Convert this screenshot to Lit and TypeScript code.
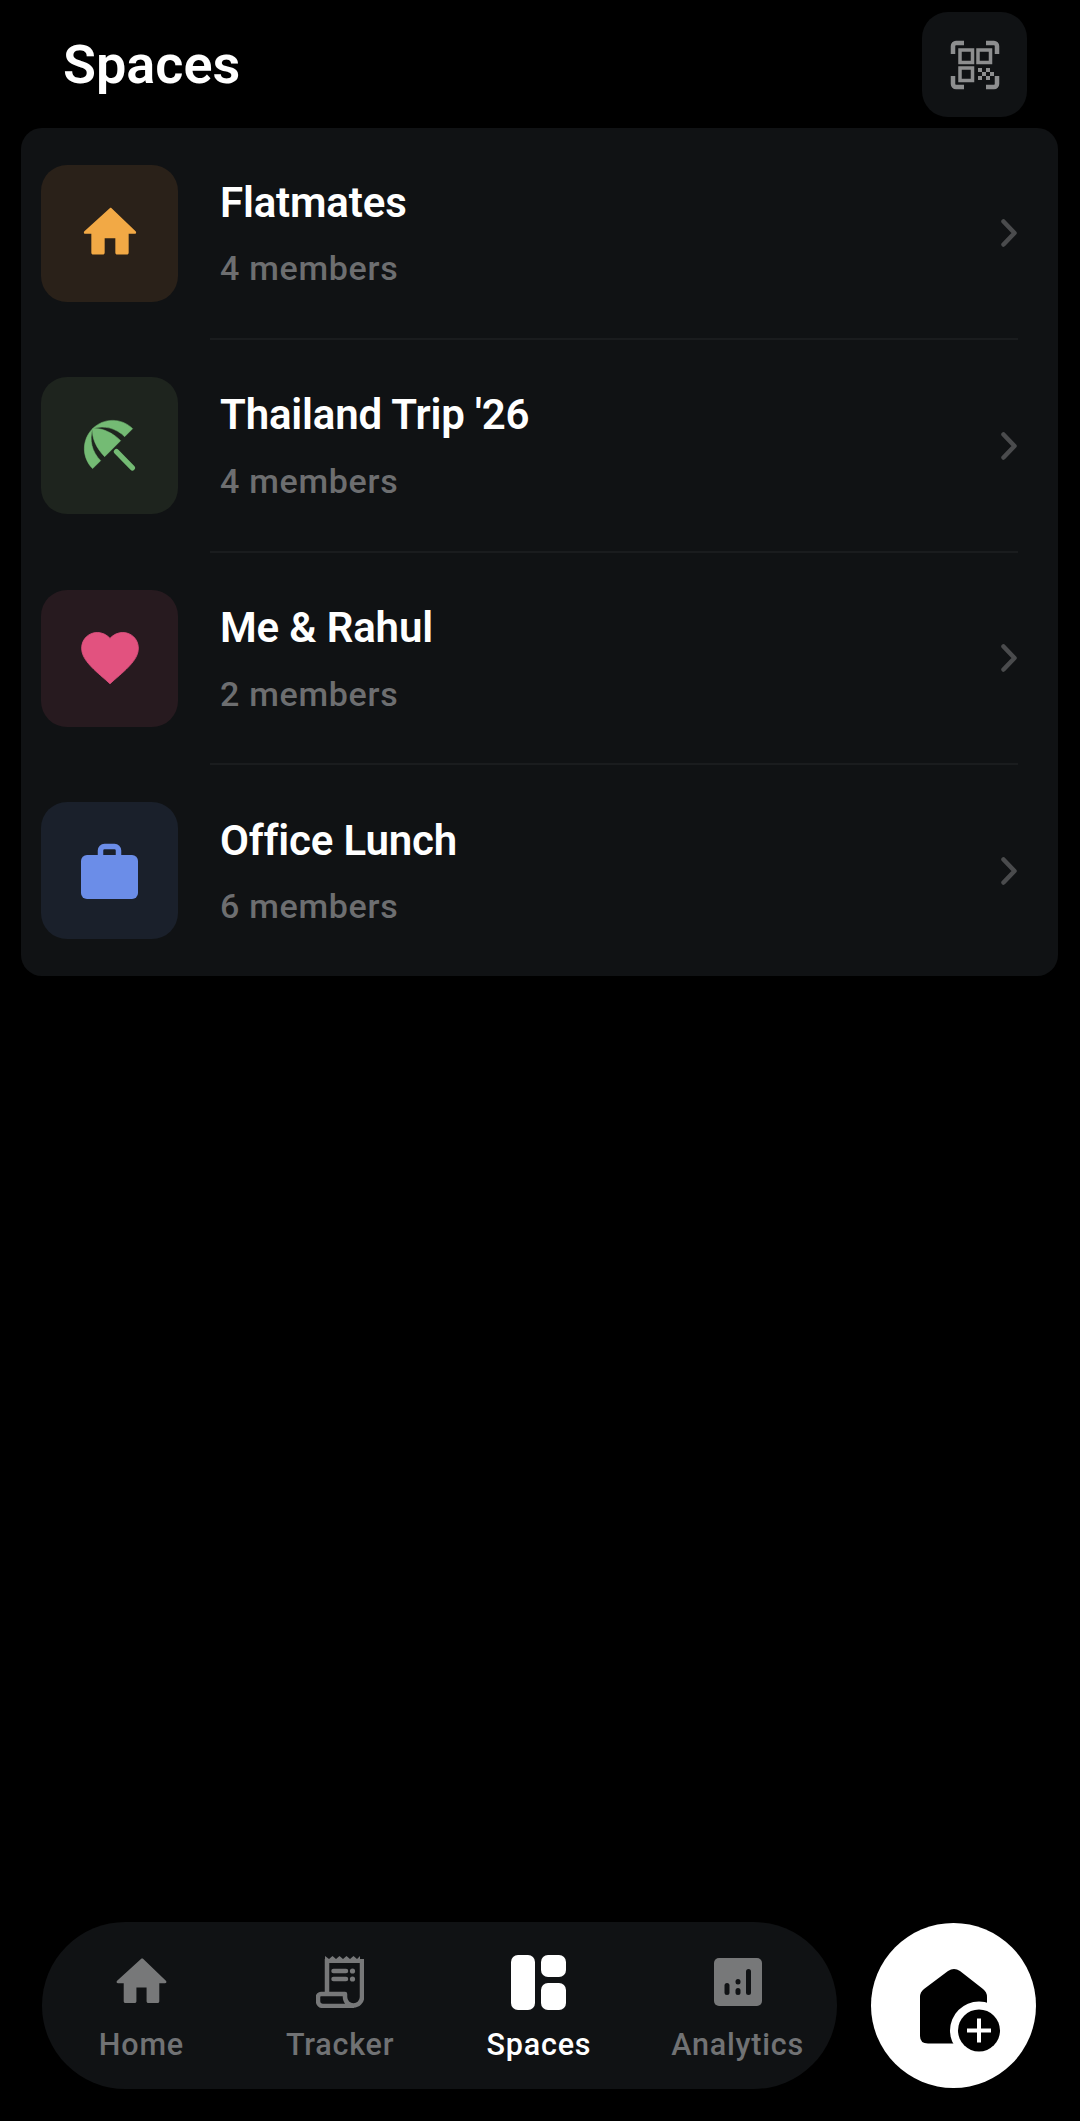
import { LitElement, html, css, svg } from "lit";
import { customElement } from "lit/decorators.js";

const icon = (w: number, h: number, vb: string, body: unknown, cls = "") =>
  html`<svg class=${cls} width=${w} height=${h} viewBox=${vb} aria-hidden="true">${body}</svg>`;

const HOME_PATH =
  "M12 2.600 2.400 11.300c-.4.4-.2 1 .4 1H5v7.100c0 .4.300.7.700.7h3.600c.4 0 .7-.3.700-.7V14h4v5.400c0 .4.300.7.700.7h3.600c.4 0 .7-.3.700-.7v-7.100h2.200c.6 0 .8-.6.400-1L12.500 2.600c-.1-.1-.4-.1-.5 0z";

const spaces = [
  {
    name: "Flatmates",
    members: "4 members",
    tint: "#2a2119",
    art: icon(64, 64, "0 0 24 24", svg`<path fill="#f2a945" d=${HOME_PATH}/>`),
  },
  {
    name: "Thailand Trip '26",
    members: "4 members",
    tint: "#1e241e",
    art: icon(67, 67, "0 0 24 24", svg`
      <path d="M14.500 14.200 20.200 20" stroke="#74bb74" stroke-width="1.900" stroke-linecap="round"/>
      <path fill="#74bb74" stroke="#74bb74" stroke-width=".2" stroke-linejoin="round" d="M17.420 8.830l2.860-2.860c-3.950-3.950-10.350-3.960-14.300-.02 3.930-1.300 8.310-.25 11.440 2.880zM5.950 5.980c-3.940 3.950-3.930 10.350.02 14.300l2.860-2.860C5.700 14.290 4.650 9.910 5.950 5.980zm.02-.02l-.01.01c-.38 3.010 1.170 6.880 4.300 10.020l5.730-5.730c-3.130-3.130-7.010-4.680-10.020-4.300z"/>`),
  },
  {
    name: "Me & Rahul",
    members: "2 members",
    tint: "#271a1f",
    art: icon(68, 68, "0 0 24 24", svg`<path fill="#e2527f" stroke="#e2527f" stroke-width=".3" stroke-linejoin="round" d="M12 21.100l-1.450-1.320C5.400 15.360 2 12.280 2 8.500 2 5.420 4.420 3 7.500 3c1.740 0 3.410.81 4.500 2.090C13.090 3.810 14.760 3 16.500 3 19.580 3 22 5.420 22 8.500c0 3.780-3.400 6.860-8.550 11.280L12 21.100z"/>`),
  },
  {
    name: "Office Lunch",
    members: "6 members",
    tint: "#1a202b",
    art: icon(57, 56, "0 0 57 56", svg`
      <rect x="0" y="12" width="57" height="44" rx="6" fill="#6b8de8"/>
      <path d="M19.500 14V7.500a4 4 0 0 1 4-4h10a4 4 0 0 1 4 4V14" fill="none" stroke="#6b8de8" stroke-width="5.500"/>`),
  },
];

const navItems = [
  {
    label: "Home",
    art: icon(61, 61, "0 0 24 24", svg`<path fill="#777879" d=${HOME_PATH}/>`),
  },
  {
    label: "Tracker",
    art: icon(48, 52, "0 0 48 52", svg`
      <path d="M9 0l4 3 3.500-3 3.500 3 3.500-3 3.500 3 3.500-3 3.500 3 3.500-3 3.500 3 3-3V7H9z" fill="#777879"/>
      <path d="M11 3v35M46 3v38a8.500 8.500 0 0 1-17 0v-3H5a3 3 0 0 0-3 3v4a5 5 0 0 0 5 5h31" fill="none" stroke="#777879" stroke-width="4.500" stroke-linejoin="round"/>
      <path d="M17.500 15h12.500M17.500 23h12.500" stroke="#777879" stroke-width="4.500" stroke-linecap="round"/>
      <circle cx="36.500" cy="15" r="2.600" fill="#777879"/><circle cx="36.500" cy="23" r="2.600" fill="#777879"/>`),
  },
  {
    label: "Spaces",
    active: true,
    art: icon(55, 55, "0 0 55 55", svg`
      <rect width="24" height="55" rx="7" fill="#fff"/>
      <rect x="30" width="25" height="22" rx="7" fill="#fff"/>
      <rect x="30" y="28" width="25" height="27" rx="7" fill="#fff"/>`),
  },
  {
    label: "Analytics",
    art: icon(48, 48, "0 0 48 48", svg`
      <rect width="48" height="48" rx="5" fill="#777879"/>
      <rect x="10.500" y="25" width="5" height="12" rx="2.500" fill="#101214"/>
      <rect x="21.500" y="21" width="5" height="5.500" rx="2.500" fill="#101214"/>
      <rect x="21.500" y="30" width="5" height="7" rx="2.500" fill="#101214"/>
      <rect x="32" y="11" width="5" height="26" rx="2.500" fill="#101214"/>`),
  },
];

@customElement("app-root")
export class AppRoot extends LitElement {
  static styles = css`
    :host {
      display: flex;
      flex-direction: column;
      height: 2121px;
      background: #000;
      font-family: Roboto, "Liberation Sans", sans-serif;
      color: #fff;
    }
    .top {
      display: flex;
      align-items: center;
      justify-content: space-between;
      height: 105px;
      margin-top: 12px;
      padding: 0 53px 0 63px;
    }
    h1 {
      margin: 0;
      font-size: 54px;
      font-weight: 600;
      line-height: 1;
    }
    .scan {
      display: flex;
      align-items: center;
      justify-content: center;
      width: 105px;
      height: 105px;
      border: 0;
      padding: 0;
      border-radius: 26px;
      background: #101214;
    }
    .card {
      display: flex;
      flex-direction: column;
      gap: 2.670px;
      margin: 11px 22px 0 21px;
      border-radius: 21px;
      background: #101214;
    }
    .row {
      display: flex;
      align-items: center;
      padding: 36.500px 41px 36.500px 20px;
      position: relative;
    }
    .row + .row::before {
      content: "";
      position: absolute;
      top: -2.670px;
      left: 189px;
      right: 40px;
      height: 2px;
      background: #1a1c1e;
    }
    .tile {
      flex: none;
      display: flex;
      align-items: center;
      justify-content: center;
      width: 137px;
      height: 137px;
      border-radius: 26px;
    }
    .text {
      flex: 1;
      margin-left: 42px;
      display: flex;
      flex-direction: column;
      gap: 20.500px;
    }
    .name {
      font-size: 42px;
      font-weight: 600;
      line-height: 50px;
      letter-spacing: -0.16px;
    }
    .members {
      font-size: 34px;
      font-weight: 500;
      line-height: 40px;
      color: #6d6e70;
      letter-spacing: 0.7px;
    }
    .chev {
      flex: none;
    }
    .spacer {
      flex: 1;
    }
    .bottom {
      display: flex;
      align-items: center;
      padding: 0 44px 32px 42px;
      gap: 34px;
    }
    nav {
      flex: 1;
      display: flex;
      height: 167px;
      border-radius: 84px;
      background: #101214;
    }
    .item {
      flex: 1;
      display: flex;
      flex-direction: column;
      align-items: center;
    }
    .art {
      display: flex;
      align-items: center;
      justify-content: center;
      height: 58px;
      margin-top: 31px;
    }
    .label {
      margin-top: 16px;
      font-size: 30.500px;
      font-weight: 500;
      line-height: 36px;
      letter-spacing: 0.8px;
      color: #717274;
    }
    .item.active .label {
      color: #fff;
    }
    .fab {
      flex: none;
      display: flex;
      align-items: center;
      justify-content: center;
      width: 165px;
      height: 165px;
      border: 0;
      padding: 0;
      border-radius: 50%;
      background: #fff;
    }
  `;

  render() {
    return html`
      <header class="top">
        <h1>Spaces</h1>
        <button class="scan" aria-label="Scan QR code">
          ${icon(50, 50, "0 0 50 50", svg`
            <g fill="none" stroke="#8d8e8f" stroke-width="4.500">
              <path d="M3 14V6a3 3 0 0 1 3-3h8M36 3h8a3 3 0 0 1 3 3v8M3 36v8a3 3 0 0 0 3 3h8M47 36v8a3 3 0 0 1-3 3h-8"/>
              <rect x="10" y="10" width="12.500" height="12.500" stroke-width="3.500"/>
              <rect x="28" y="10" width="12.500" height="12.500" stroke-width="3.500"/>
              <rect x="10" y="28" width="12.500" height="12.500" stroke-width="3.500"/>
            </g>
            <g fill="#8d8e8f">
              <rect x="28" y="28" width="4" height="4"/><rect x="36" y="28" width="4" height="4"/>
              <rect x="32" y="32" width="4" height="4"/><rect x="40" y="32" width="4" height="4"/>
              <rect x="28" y="36" width="4" height="4"/><rect x="36" y="36" width="4" height="4"/>
            </g>`)}
        </button>
      </header>
      <section class="card">
        ${spaces.map(
          (s) => html`
            <div class="row">
              <div class="tile" style="background:${s.tint}">${s.art}</div>
              <div class="text">
                <div class="name">${s.name}</div>
                <div class="members">${s.members}</div>
              </div>
              ${icon(16, 28, "0 0 16 28", svg`<path d="M2.500 2.500 13.500 14 2.500 25.500" fill="none" stroke="#4a4b4d" stroke-width="4.500" stroke-linecap="round" stroke-linejoin="round"/>`, "chev")}
            </div>
          `
        )}
      </section>
      <div class="spacer"></div>
      <footer class="bottom">
        <nav>
          ${navItems.map(
            (n) => html`
              <div class="item ${n.active ? "active" : ""}">
                <div class="art">${n.art}</div>
                <div class="label">${n.label}</div>
              </div>
            `
          )}
        </nav>
        <button class="fab" aria-label="New space">
          ${icon(100, 100, "0 0 100 100", svg`
            <path d="M44 15 20 33Q16 36 16 41V80Q16 87.500 24 87.500H70V60H83V41Q83 36 79 33L56 15Q50 11 44 15z" fill="#000"/>
            <circle cx="75" cy="74.500" r="29" fill="#fff"/>
            <circle cx="75" cy="74.500" r="21" fill="#000"/>
            <path d="M75 62.500V86.500M63 74.500H87" stroke="#fff" stroke-width="4"/>`)}
        </button>
      </footer>
    `;
  }
}
